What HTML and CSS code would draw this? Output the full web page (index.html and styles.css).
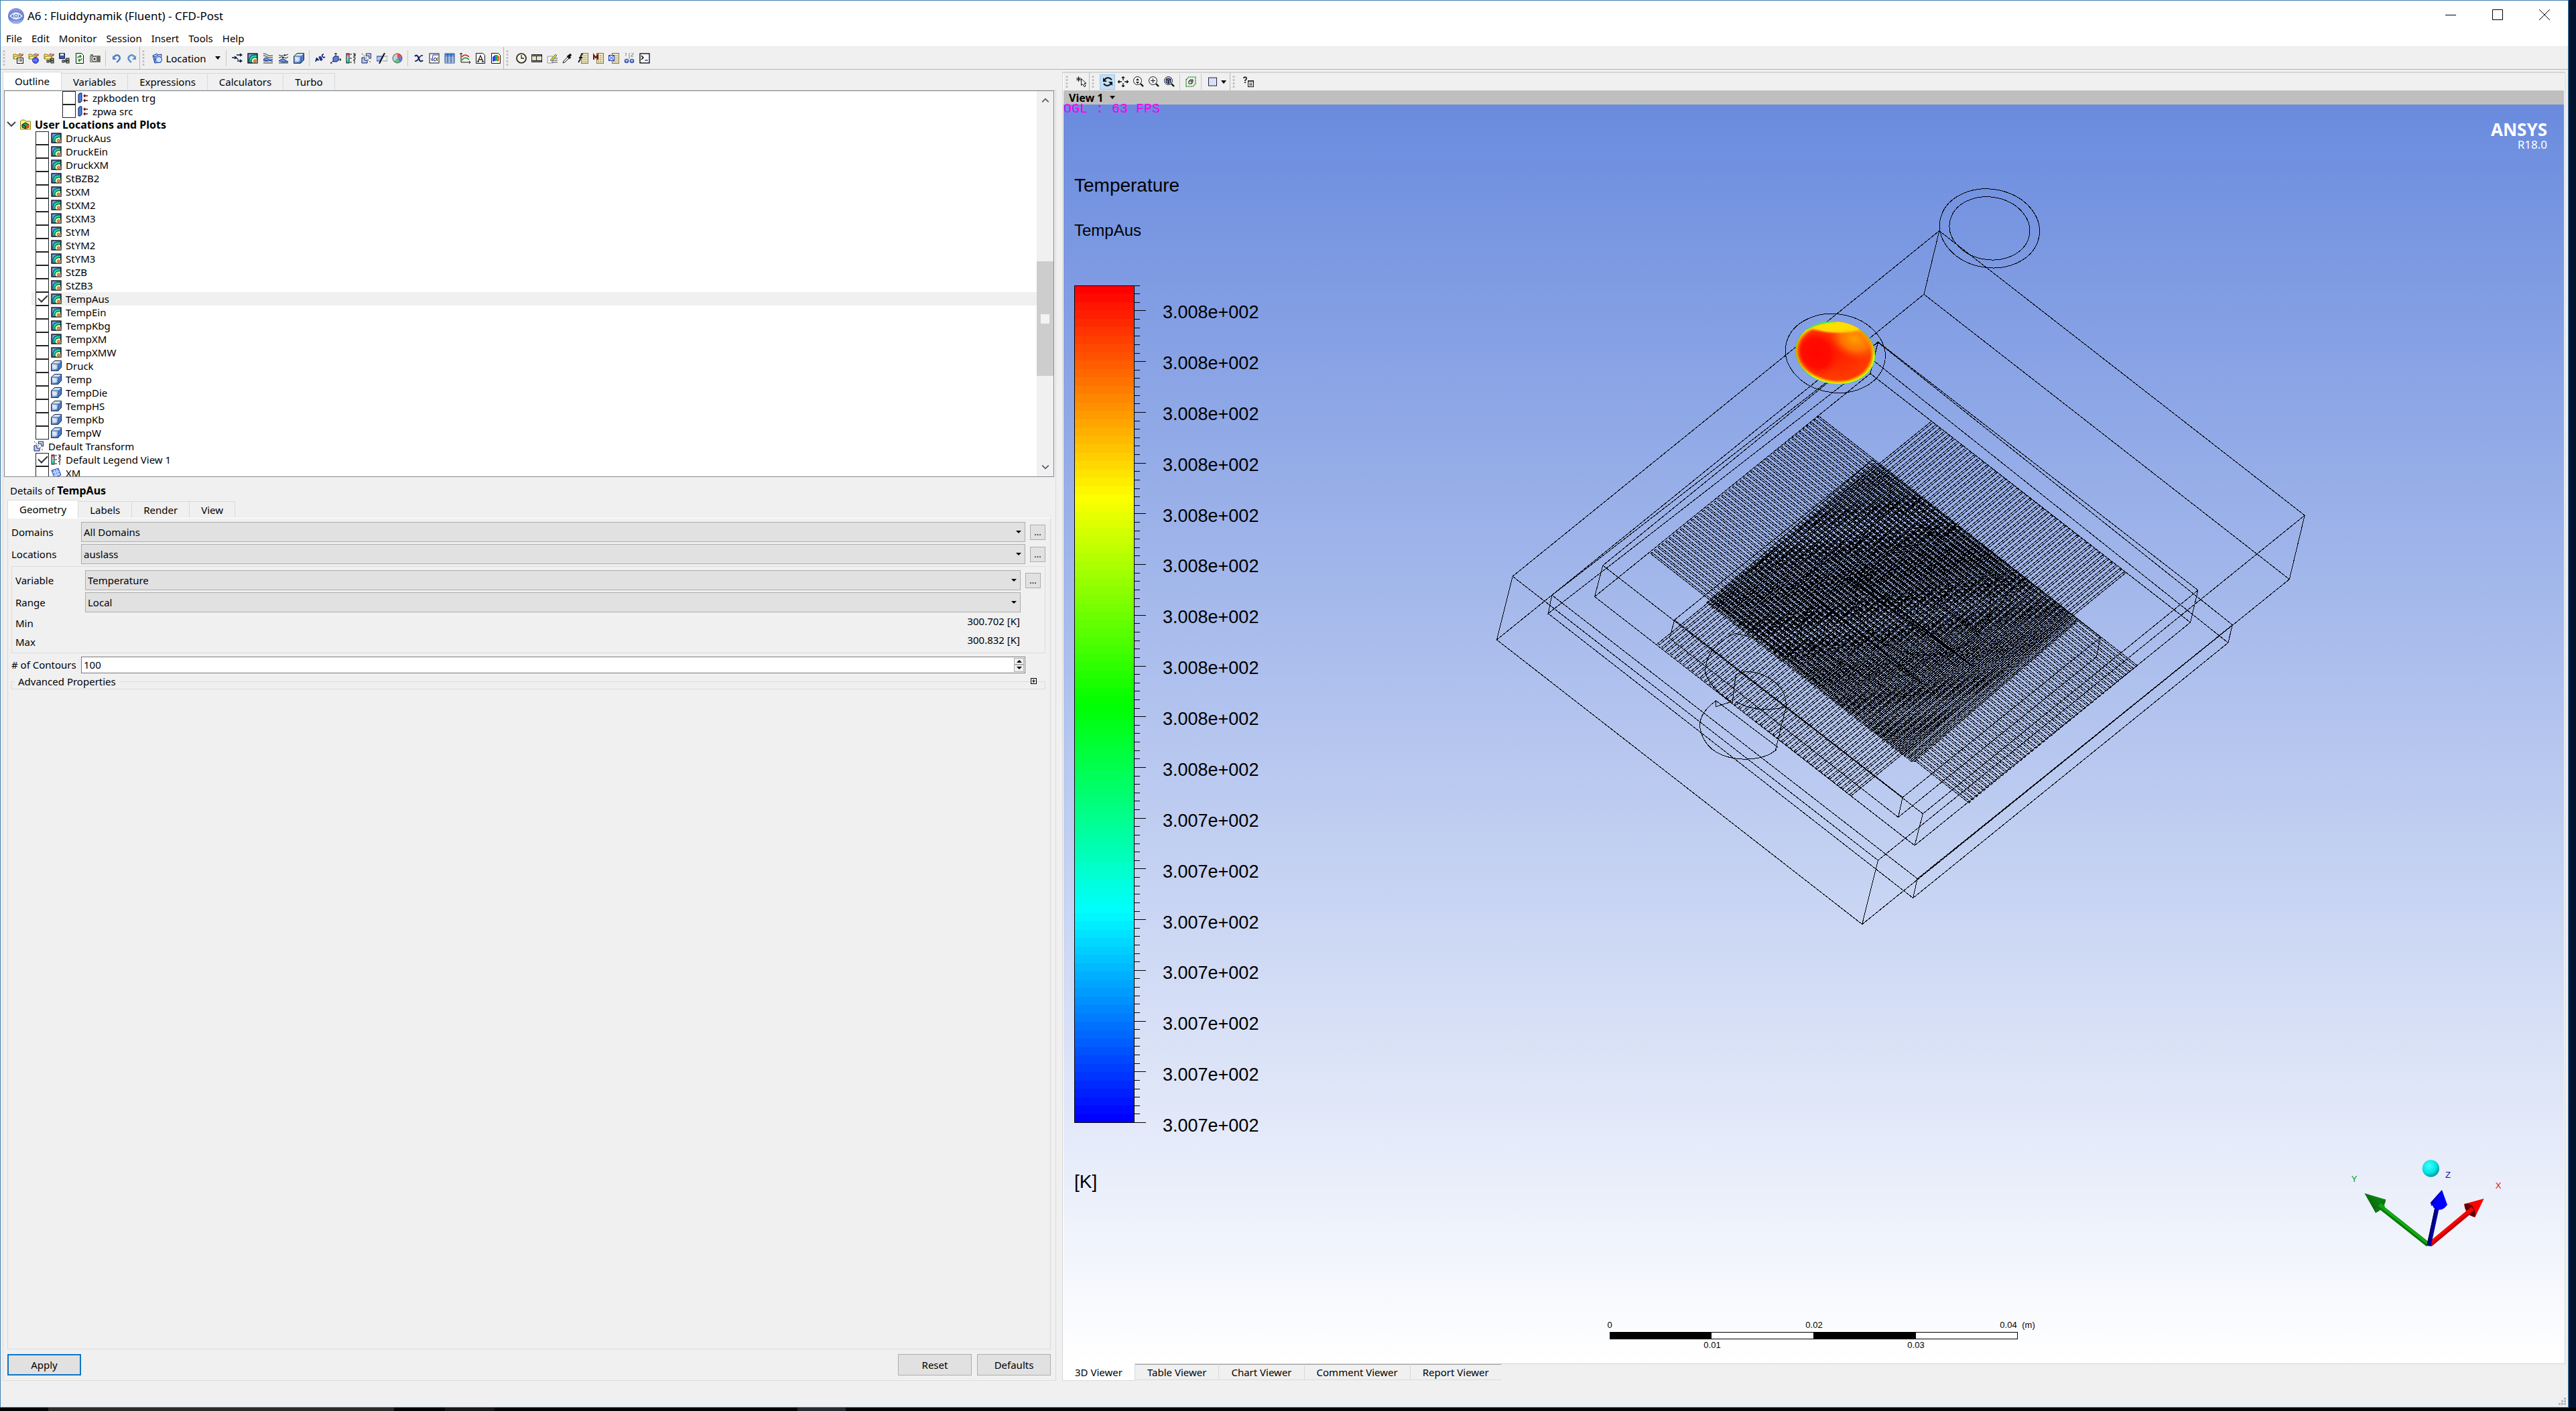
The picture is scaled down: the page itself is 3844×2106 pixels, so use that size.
FILE: index.html
```html
<!DOCTYPE html>
<html lang="en">
<head>
<meta charset="utf-8">
<title>A6 : Fluiddynamik (Fluent) - CFD-Post</title>
<link rel="stylesheet" href="styles.css">
</head>
<body>
<svg class="defs" aria-hidden="true">
  <defs>
    <linearGradient id="cubeFill" x1="0" y1="0" x2="1" y2="1"><stop offset="0" stop-color="#fff"/><stop offset="1" stop-color="#3f74c8"/></linearGradient>
    <linearGradient id="orb" x1="0" y1="0" x2="0" y2="1"><stop offset="0" stop-color="#8d9bd6"/><stop offset=".6" stop-color="#5f78cf"/><stop offset="1" stop-color="#a9c4f4"/></linearGradient>
    <linearGradient id="rainbow" x1="0" y1="0" x2="0" y2="1"><stop offset="0" stop-color="#e33"/><stop offset=".3" stop-color="#ffb0e0"/><stop offset=".6" stop-color="#4fd"/><stop offset="1" stop-color="#3c9"/></linearGradient>
    <g id="folder"><path d="M1 8V2h4l1 1h5v5z" fill="#ffe46b" stroke="#8a7410"/><path d="M1 9l2-4h10l-3 4z" fill="#fff3a0" stroke="#8a7410"/><path d="M9 2q3-2 5 1M15 1v3h-3" fill="none" stroke="#a01010"/></g>
    <g id="net" fill="#9fd08a" stroke="#111"><path d="M7 12h3M10 9v5" fill="none"/><rect x="5" y="11" width="3" height="3"/><rect x="11" y="8" width="4" height="3"/><rect x="11" y="12" width="4" height="3"/></g>
    <g id="grid"><rect x="5.500" y=".5" width="10" height="15" fill="#efe6bd" stroke="#7a7350"/><path d="M7 4h7M7 7h7M7 10h7M7 13h7" stroke="#8d8560" stroke-dasharray="2 1"/></g>
    <symbol id="i-load" viewBox="0 0 16 16"><use href="#folder"/><rect x="6.500" y="7.500" width="9" height="8" fill="#fff" stroke="#111"/><path d="M8 10h1m1 0h4M8 12h1m1 0h4" stroke="#111"/></symbol>
    <symbol id="i-state" viewBox="0 0 16 16"><use href="#folder"/><circle cx="11" cy="11" r="4.500" fill="#4a5cf0" stroke="#2535b0"/><path d="M8 11h6" stroke="#fff" stroke-dasharray="1 1"/></symbol>
    <symbol id="i-session" viewBox="0 0 16 16"><use href="#folder"/><use href="#net"/></symbol>
    <symbol id="i-save" viewBox="0 0 16 16"><path d="M.5.5h8v8h-8z" fill="#3a55a8" stroke="#16245c"/><path d="M2 1h5v3H2z" fill="#dfe6f8"/><use href="#net"/></symbol>
    <symbol id="i-refresh" viewBox="0 0 16 16"><path d="M2.500.5h8l3 3v12h-11z" fill="#fff" stroke="#111"/><path d="M5 8q0-3 4-3M8 3l2 2-2 2M11 8q0 3-4 3M8 9l-2 2 2 2" fill="none" stroke="#149014" stroke-width="1.500"/></symbol>
    <symbol id="i-camera" viewBox="0 0 16 16"><path d="M.5 4.500h15v9H.5z" fill="#b8b5a6" stroke="#77756b"/><path d="M1 2h4v2H1z" fill="#77756b"/><path d="M11 4h4v9h-4z" fill="#6c6a60"/><circle cx="7" cy="9" r="4" fill="#eee" stroke="#555"/><circle cx="7" cy="9" r="1.800" fill="#444"/></symbol>
    <symbol id="i-undo" viewBox="0 0 16 16"><path d="M8 14q7-5 4-9-4-4-8 1" fill="none" stroke="#4a7fc8" stroke-width="2.500"/><path d="M2 4v6h6z" fill="#4a7fc8"/></symbol>
    <symbol id="i-redo" viewBox="0 0 16 16"><path d="M7 14q-7-5-3-9 4-4 8 1" fill="none" stroke="#5a92cc" stroke-width="2.500"/><path d="M14 4v6H8z" fill="#5a92cc"/></symbol>
    <symbol id="i-location" viewBox="0 0 16 16"><path d="M1 4l6-3 2 2 5-1-1 12-9 1z" fill="#b9cff8" stroke="#123a9c"/><path d="M1 4l3 2 5-3M4 6v9" fill="none" stroke="#123a9c"/><circle cx="10" cy="10" r="4.500" fill="#d5e3ff" stroke="#123a9c"/></symbol>
    <symbol id="i-vector" viewBox="0 0 16 16"><path d="M0 7h6M4 5l3 2-3 2M7 3h7M12 1l3 2-3 2M8 12h6M12 10l3 2-3 2M7 8l3 2" fill="none" stroke="#0a1440" stroke-width="1.300"/></symbol>
    <symbol id="i-contour" viewBox="0 0 16 16"><rect x="1" y="1" width="14" height="14" fill="#6f9de8" stroke="#111" stroke-width="1.400"/><path d="M3 14.500V9q1-5 6-6h5.500v11.500z" fill="#17dca8" stroke="#123"/><path d="M6 14.500V10q2-4 8.500-3.500v8z" fill="#c9f7a0" stroke="#123"/><path d="M8 14.500v-3q2-3 6.500-1v4z" fill="#ffe9a0"/><circle cx="11.500" cy="12" r="1.700" fill="#f6c0a8" stroke="#a01818"/></symbol>
    <symbol id="i-stream" viewBox="0 0 16 16"><path d="M1 1q4 0 6 2t8 1M1 4q4 0 6 2t8 1M1 15h14M1 12q5 1 9-1l5 2" fill="none" stroke="#222"/><path d="M1 10q3-5 6-2t8 2q-6 4-14 0z" fill="#5d94ea" stroke="#123a8c"/></symbol>
    <symbol id="i-particle" viewBox="0 0 16 16"><path d="M1 3q6 3 14-1M1 7q5-2 8 0t6-1M1 15h14" fill="none" stroke="#222"/><circle cx="10" cy="3" r="1"/><circle cx="7" cy="7" r="1"/><path d="M1 12q5-5 9-2t5 3q-7 2-14-1z" fill="#5d94ea" stroke="#123a8c"/></symbol>
    <symbol id="i-cube" viewBox="0 0 16 16"><path d="M.5 5l5-4.500h10v10l-5 5H.5z" fill="#4c7fc8" stroke="#123" /><path d="M1 5l5-4h9l-4 4z" fill="#cfe2fb"/><rect x="1" y="5" width="10" height="10" fill="url(#cubeFill)" stroke="#2c5390"/><circle cx="6" cy="10" r="3" fill="#fff" opacity=".6"/></symbol>
    <symbol id="i-abc" viewBox="0 0 16 16"><path d="M1 13l1.500-5L6 11M2 11l2-1M6 6l3 5q3-1 0-3 1-3-3-2M15 6q-3 2-4-1t2-3" fill="none" stroke="#14207a" stroke-width="1.700"/></symbol>
    <symbol id="i-coord" viewBox="0 0 16 16"><path d="M8 6V0M6 2l2-2 2 2M10 10h6M14 8l2 2-2 2M4 12l-4 4M0 13v3h3" fill="none" stroke="#111"/><path d="M4 7l2-2h6v6l-2 2H4z" fill="#5d7ee0" stroke="#102060"/></symbol>
    <symbol id="i-legend" viewBox="0 0 16 16"><rect x="1" y="1" width="4" height="14" fill="url(#rainbow)" stroke="#111"/><path d="M6 2h3M6 8h3M6 14h3M11 1h3v2h-2 2v2h-3M11 7h3v2l-3 2h3M13 12v4" fill="none" stroke="#111"/></symbol>
    <symbol id="i-transform" viewBox="0 0 16 16"><path d="M7 1h8v8h-3V5H7z" fill="#b9cff8" stroke="#111a50" transform="translate(1 0) scale(.9)"/><path d="M1 8h4v4h4v4H1z" fill="#b9cff8" stroke="#111a50" transform="translate(0 -1)"/><path d="M1 1l14 14" stroke="#111" stroke-dasharray="2 2"/></symbol>
    <symbol id="i-clip" viewBox="0 0 16 16"><path d="M0 5h9l-4 7H0z" fill="#a9c4f6" stroke="#16308c"/><path d="M12 0L4 16" stroke="#111" stroke-width="2"/><path d="M11 5h5v7H8" fill="none" stroke="#333" stroke-dasharray="1 1"/></symbol>
    <symbol id="i-color" viewBox="0 0 16 16"><circle cx="8" cy="8" r="7" fill="#a8e0f0"/><path d="M8 8L2 4q3-4 6-3z" fill="#f7b6c8"/><path d="M8 8V1q5 0 7 5z" fill="#e85050"/><path d="M8 8l7-2q0 6-4 8z" fill="#5a78e8"/><path d="M8 8l3 6q-5 2-8-2z" fill="#58d058"/><circle cx="8" cy="8" r="7" fill="none" stroke="#555"/></symbol>
    <symbol id="i-var" viewBox="0 0 16 16"><path d="M2 5q3-3 5 1l2 5q2 3 5 0" fill="none" stroke="#101c60" stroke-width="2.200"/><path d="M14 4q-3-1-6 4t-6 4" fill="none" stroke="#101c60" stroke-width="1.500"/></symbol>
    <symbol id="i-expr" viewBox="0 0 16 16"><rect x="1" y="1" width="14" height="14" fill="#fff" stroke="#111"/><path d="M3 8l2 4 1-9h8" fill="none" stroke="#2030c0"/><path d="M13 7q-3 6-5 5t0-4 5 4" fill="none" stroke="#111"/></symbol>
    <symbol id="i-table" viewBox="0 0 16 16"><rect x="1" y="1" width="14" height="14" fill="#e8f0ff" stroke="#1d4a94"/><path d="M1 3h14" stroke="#3a78d8" stroke-width="3"/><path d="M1 6h14M1 9h14M1 12h14M5 1v14M10 1v14" stroke="#1d4a94"/></symbol>
    <symbol id="i-chart" viewBox="0 0 16 16"><path d="M2 0v14h14M0 2l2-2 2 2M14 12l2 2-2 2" fill="none" stroke="#111"/><path d="M3 6q5-6 11 0" fill="none" stroke="#d01818" stroke-width="1.500"/><path d="M3 11q5-7 11-1" fill="none" stroke="#189018" stroke-width="1.500"/></symbol>
    <symbol id="i-text" viewBox="0 0 16 16"><path d="M1.500.5h10l3 3v12h-13z" fill="#fff" stroke="#111"/><path d="M4 13l4-9 4 9M6 10h4M3 13h3M10 13h3" fill="none" stroke="#222" stroke-width="1.300"/></symbol>
    <symbol id="i-figure" viewBox="0 0 16 16"><path d="M1.500.5h10l3 3v12h-13z" fill="#fff" stroke="#111"/><path d="M3 6l4-3v9l-4 1z" fill="#2848e0"/><path d="M7 3h3v9H7z" fill="#20b050"/><path d="M10 3l3 2v7l-3 1z" fill="#e87020"/></symbol>
    <symbol id="i-clock" viewBox="0 0 16 16"><circle cx="8" cy="8" r="7" fill="#fbf8e8" stroke="#222" stroke-width="1.700"/><path d="M8 3v5h4" fill="none" stroke="#222" stroke-width="1.300"/></symbol>
    <symbol id="i-film" viewBox="0 0 16 16"><path d="M0 2h16v12H0z" fill="#222"/><path d="M1 5h6v6H1zM8 5h7v6H8z" fill="#e6e2c8"/><path d="M1 3.500h14M1 12.500h14" stroke="#eee" stroke-dasharray="1 1"/></symbol>
    <symbol id="i-edit" viewBox="0 0 16 16"><path d="M1 5h8v10H1z" fill="#f4f4f4" stroke="#999"/><path d="M7 8h9M7 11h9M7 14h9" stroke="#555"/><path d="M5 11L13 2l2 2-8 8z" fill="#e8e020" stroke="#666"/></symbol>
    <symbol id="i-probe" viewBox="0 0 16 16"><path d="M1 15l1-3 7-7 2 2-7 7z" fill="#e8e8e0" stroke="#222"/><path d="M8 4l4 4M10 5l3-3" stroke="#111" stroke-width="3.400"/></symbol>
    <symbol id="i-func" viewBox="0 0 16 16"><use href="#grid"/><path d="M8 2q-3-1-3.500 4T1 14M2 7h5" fill="none" stroke="#111" stroke-width="1.800"/></symbol>
    <symbol id="i-macro" viewBox="0 0 16 16"><use href="#grid"/><path d="M1 10V3l3 4 3-4v7" fill="none" stroke="#7a1010" stroke-width="2"/></symbol>
    <symbol id="i-meshcalc" viewBox="0 0 16 16"><use href="#grid"/><path d="M.5 3.500h8v8h-8zl8 8m0-8l-8 8" fill="#dce6ff" stroke="#1830c0"/></symbol>
    <symbol id="i-compare" viewBox="0 0 16 16"><path d="M2 1l1-1v5M10 0h4v2l-4 3h4M8 0v9" fill="none" stroke="#888"/><circle cx="4" cy="12" r="3.300" fill="#2d4fb0"/><circle cx="12" cy="12" r="3.300" fill="#2d4fb0"/><path d="M2 11h4M4 11v3M10 11h4M12 11v3" stroke="#fff"/></symbol>
    <symbol id="i-cmd" viewBox="0 0 16 16"><rect x="1" y="1" width="14" height="14" fill="#fff" stroke="#111" stroke-width="1.400"/><path d="M3 4l3 3-3 3" fill="none" stroke="#111" stroke-width="1.600"/><path d="M8 11h5" stroke="#2850a8" stroke-width="1.500"/></symbol>
    <symbol id="i-pick" viewBox="0 0 16 16"><path d="M0 4h7M3.500 0v8M1 1.500l5 5M6 1.500l-5 5" stroke="#111"/><path d="M7.500 3.500v10l2.500-2 2 4 2-1-2-4h3z" fill="#fff" stroke="#111"/></symbol>
    <symbol id="i-rotate" viewBox="0 0 16 16"><path d="M14 5Q8-1 3 5M2 11q5 6 11 0" fill="none" stroke="#111" stroke-width="2"/><path d="M1 2v6h6zM15 14V8H9z" fill="#111"/></symbol>
    <symbol id="i-pan" viewBox="0 0 16 16"><path d="M8 6V0M6 2.500L8 .5l2 2M8 10v6M6 13.500l2 2 2-2M6 8H0M2.500 6l-2 2 2 2M10 8h6M13.500 6l2 2-2 2" fill="none" stroke="#111" stroke-width="1.300"/></symbol>
    <g id="lens"><circle cx="6.500" cy="6.500" r="6" fill="#f8fbff" stroke="#111"/><path d="M11 11l4 4" stroke="#111" stroke-width="2.400"/></g>
    <symbol id="i-zoom" viewBox="0 0 16 16"><use href="#lens"/><path d="M4 6l2.500-3L9 6zM4 8l2.500 3L9 8z"/></symbol>
    <symbol id="i-zoombox" viewBox="0 0 16 16"><use href="#lens"/><path d="M3 6.500h7M6.500 3v7" stroke="#111"/></symbol>
    <symbol id="i-fit" viewBox="0 0 16 16"><use href="#lens"/><path d="M3 4l3.500-1.500L10 4v5l-3.500 2L3 9z" fill="#5d7ee0" stroke="#111"/><path d="M3 4l3.500 2L10 4M6.500 6v5" fill="none" stroke="#111"/></symbol>
    <symbol id="i-outline" viewBox="0 0 16 16"><path d="M1 5l4-4h10v10l-4 4H1z" fill="none" stroke="#108a10" stroke-width="1.600" stroke-dasharray="1.500 1"/><path d="M5 7l2-2h4v4l-2 2H5zM5 7h4v4M9 7l2-2" fill="#fff" stroke="#111"/></symbol>
    <symbol id="i-square" viewBox="0 0 16 16"><rect x="1.500" y="2" width="12" height="12" fill="#d6e2fa" stroke="#223"/></symbol>
    <symbol id="i-help" viewBox="0 0 16 16"><path d="M1 3q0-2 2-2t2 2-2 3v1M3 8v2" fill="none" stroke="#111" stroke-width="1.700"/><rect x="7.500" y="6.500" width="8" height="9" fill="#fff" stroke="#111"/><path d="M7 8h9M9 11h5M9 13h5" stroke="#111"/></symbol>
    <symbol id="i-boundary" viewBox="0 0 16 16"><path d="M1 3l2-2h3v12l-2 2H1z" fill="#4c7fe0" stroke="#0a1a50"/><path d="M9 5h6M11 3L9 5l2 2M9 12h6M11 10l-2 2 2 2" fill="none" stroke="#6a1010" stroke-width="1.300"/></symbol>
    <symbol id="i-group" viewBox="0 0 16 16"><path d="M.5 15V3l2-2h4l2 2h7v12z" fill="#f8ef80" stroke="#8a8010"/><path d="M3 8l5-3 5 3v4l-5 2-5-2z" fill="#20a860" stroke="#111"/><path d="M8 9l5-1v4l-5 2z" fill="#e05020"/><path d="M3 8l5 2v4" fill="none" stroke="#111"/></symbol>
    <symbol id="i-plane" viewBox="0 0 16 16"><path d="M1 4l10-3 4 10-10 4z" fill="#7ba6f4" stroke="#123a9c"/><path d="M2.500 8l10-3M4 12l10-3M4.500 3l4 10M8 2l4 10" stroke="#dfe9ff"/></symbol>
  </defs>
</svg>

<div class="window">
  <header class="titlebar">
    <svg class="app-icon" viewBox="0 0 24 24"><circle cx="12" cy="12" r="12" fill="url(#orb)"/><path d="M3 12q9-9 18 0-9 8-18 0z" fill="none" stroke="#fff" stroke-width="1.300"/><circle cx="12" cy="11.500" r="3.500" fill="none" stroke="#fff" stroke-width="1.300"/><circle cx="12" cy="11.500" r="1.300" fill="#fff"/></svg>
    <h1>A6 : Fluiddynamik (Fluent) - CFD-Post</h1>
    <div class="caption">
      <button aria-label="Minimize"><svg viewBox="0 0 16 16"><path d="M0 8.500h16"/></svg></button>
      <button aria-label="Maximize"><svg viewBox="0 0 16 16"><path d="M.5.5h15v15H.5z"/></svg></button>
      <button aria-label="Close"><svg viewBox="0 0 16 16"><path d="M0 0l16 16M16 0L0 16"/></svg></button>
    </div>
  </header>
  <nav class="menubar">
    <button>File</button><button>Edit</button><button>Monitor</button><button>Session</button><button>Insert</button><button>Tools</button><button>Help</button>
  </nav>

  <div class="toolbar">
    <div class="group">
      <i class="handle"></i>
      <button aria-label="Load results"><svg><use href="#i-load"/></svg></button>
      <button aria-label="Load state"><svg><use href="#i-state"/></svg></button>
      <button aria-label="Load session"><svg><use href="#i-session"/></svg></button>
      <button aria-label="Save project"><svg><use href="#i-save"/></svg></button>
      <button aria-label="Refresh"><svg><use href="#i-refresh"/></svg></button>
      <button aria-label="Save picture"><svg><use href="#i-camera"/></svg></button>
      <i class="sep"></i>
      <button aria-label="Undo"><svg><use href="#i-undo"/></svg></button>
      <button aria-label="Redo"><svg><use href="#i-redo"/></svg></button>
    </div>
    <div class="group">
      <i class="handle"></i>
      <button class="location"><svg><use href="#i-location"/></svg>Location<i class="arrow"></i></button>
      <i class="sep"></i>
      <button aria-label="Vector"><svg><use href="#i-vector"/></svg></button>
      <button aria-label="Contour"><svg><use href="#i-contour"/></svg></button>
      <button aria-label="Streamline"><svg><use href="#i-stream"/></svg></button>
      <button aria-label="Particle track"><svg><use href="#i-particle"/></svg></button>
      <button aria-label="Volume rendering"><svg><use href="#i-cube"/></svg></button>
      <i class="sep"></i>
      <button aria-label="Text"><svg><use href="#i-abc"/></svg></button>
      <button aria-label="Coordinate frame"><svg><use href="#i-coord"/></svg></button>
      <button aria-label="Legend"><svg><use href="#i-legend"/></svg></button>
      <button aria-label="Instance transform"><svg><use href="#i-transform"/></svg></button>
      <button aria-label="Clip plane"><svg><use href="#i-clip"/></svg></button>
      <button aria-label="Color map"><svg><use href="#i-color"/></svg></button>
      <i class="sep"></i>
      <button aria-label="Variable"><svg><use href="#i-var"/></svg></button>
      <button aria-label="Expression"><svg><use href="#i-expr"/></svg></button>
      <button aria-label="Table"><svg><use href="#i-table"/></svg></button>
      <button aria-label="Chart"><svg><use href="#i-chart"/></svg></button>
      <button aria-label="Comment"><svg><use href="#i-text"/></svg></button>
      <button aria-label="Figure"><svg><use href="#i-figure"/></svg></button>
    </div>
    <div class="group last">
      <i class="handle"></i>
      <button aria-label="Timestep selector"><svg><use href="#i-clock"/></svg></button>
      <button aria-label="Animation"><svg><use href="#i-film"/></svg></button>
      <button aria-label="Quick editor"><svg><use href="#i-edit"/></svg></button>
      <button aria-label="Probe"><svg><use href="#i-probe"/></svg></button>
      <button aria-label="Function calculator"><svg><use href="#i-func"/></svg></button>
      <button aria-label="Macro calculator"><svg><use href="#i-macro"/></svg></button>
      <button aria-label="Mesh calculator"><svg><use href="#i-meshcalc"/></svg></button>
      <button aria-label="Case comparison"><svg><use href="#i-compare"/></svg></button>
      <button aria-label="Command editor"><svg><use href="#i-cmd"/></svg></button>
    </div>
  </div>

  <main class="panes">
    <section class="dock">
      <div class="tabs">
        <button class="active">Outline</button><button>Variables</button><button>Expressions</button><button>Calculators</button><button>Turbo</button>
      </div>
      <div class="dock-body">
        <div class="tree-box">
          <ul class="tree">
            <li class="deep"><label><input type="checkbox"><svg><use href="#i-boundary"/></svg>zpkboden trg</label></li>
            <li class="deep"><label><input type="checkbox"><svg><use href="#i-boundary"/></svg>zpwa src</label></li>
            <li class="branch"><svg class="chevron" viewBox="0 0 14 10"><path d="M1 1l6 6 6-6"/></svg><svg><use href="#i-group"/></svg>User Locations and Plots</li>
            <li><label><input type="checkbox"><svg><use href="#i-contour"/></svg>DruckAus</label></li>
            <li><label><input type="checkbox"><svg><use href="#i-contour"/></svg>DruckEin</label></li>
            <li><label><input type="checkbox"><svg><use href="#i-contour"/></svg>DruckXM</label></li>
            <li><label><input type="checkbox"><svg><use href="#i-contour"/></svg>StBZB2</label></li>
            <li><label><input type="checkbox"><svg><use href="#i-contour"/></svg>StXM</label></li>
            <li><label><input type="checkbox"><svg><use href="#i-contour"/></svg>StXM2</label></li>
            <li><label><input type="checkbox"><svg><use href="#i-contour"/></svg>StXM3</label></li>
            <li><label><input type="checkbox"><svg><use href="#i-contour"/></svg>StYM</label></li>
            <li><label><input type="checkbox"><svg><use href="#i-contour"/></svg>StYM2</label></li>
            <li><label><input type="checkbox"><svg><use href="#i-contour"/></svg>StYM3</label></li>
            <li><label><input type="checkbox"><svg><use href="#i-contour"/></svg>StZB</label></li>
            <li><label><input type="checkbox"><svg><use href="#i-contour"/></svg>StZB3</label></li>
            <li class="selected"><label><input type="checkbox" checked><svg><use href="#i-contour"/></svg>TempAus</label></li>
            <li><label><input type="checkbox"><svg><use href="#i-contour"/></svg>TempEin</label></li>
            <li><label><input type="checkbox"><svg><use href="#i-contour"/></svg>TempKbg</label></li>
            <li><label><input type="checkbox"><svg><use href="#i-contour"/></svg>TempXM</label></li>
            <li><label><input type="checkbox"><svg><use href="#i-contour"/></svg>TempXMW</label></li>
            <li><label><input type="checkbox"><svg><use href="#i-cube"/></svg>Druck</label></li>
            <li><label><input type="checkbox"><svg><use href="#i-cube"/></svg>Temp</label></li>
            <li><label><input type="checkbox"><svg><use href="#i-cube"/></svg>TempDie</label></li>
            <li><label><input type="checkbox"><svg><use href="#i-cube"/></svg>TempHS</label></li>
            <li><label><input type="checkbox"><svg><use href="#i-cube"/></svg>TempKb</label></li>
            <li><label><input type="checkbox"><svg><use href="#i-cube"/></svg>TempW</label></li>
            <li class="plain"><svg><use href="#i-transform"/></svg>Default Transform</li>
            <li><label><input type="checkbox" checked><svg><use href="#i-legend"/></svg>Default Legend View 1</label></li>
            <li><label><input type="checkbox"><svg><use href="#i-plane"/></svg>XM</label></li>
          </ul>
          <div class="scrollbar">
            <svg viewBox="0 0 14 10"><path d="M1 8l6-6 6 6"/></svg>
            <div class="track"><div class="thumb"><i></i></div></div>
            <svg viewBox="0 0 14 10"><path d="M1 2l6 6 6-6"/></svg>
          </div>
        </div>

        <h2>Details of <b>TempAus</b></h2>
        <div class="tabs inner">
          <button class="active">Geometry</button><button>Labels</button><button>Render</button><button>View</button>
        </div>
        <form class="details">
          <div class="row">
            <label for="domains">Domains</label>
            <span class="combo"><select id="domains"><option>All Domains</option></select></span>
            <button type="button" class="more">...</button>
          </div>
          <div class="row">
            <label for="locations">Locations</label>
            <span class="combo"><select id="locations"><option>auslass</option></select></span>
            <button type="button" class="more">...</button>
          </div>
          <div class="frame">
            <div class="row">
              <label for="variable">Variable</label>
              <span class="combo"><select id="variable"><option>Temperature</option></select></span>
              <button type="button" class="more">...</button>
            </div>
            <div class="row">
              <label for="range">Range</label>
              <span class="combo"><select id="range"><option>Local</option></select></span>
              <span class="more-space"></span>
            </div>
            <div class="value"><span>Min</span><output>300.702 [K]</output></div>
            <div class="value"><span>Max</span><output>300.832 [K]</output></div>
          </div>
          <div class="row contours">
            <label for="contours"># of Contours</label>
            <span class="spin"><input id="contours" type="text" value="100"><span class="steps"><button type="button" aria-label="Increase"></button><button type="button" aria-label="Decrease"></button></span></span>
            <span class="more-space"></span>
          </div>
          <fieldset>
            <legend>Advanced Properties</legend>
            <button type="button" class="expand" aria-label="Expand"></button>
          </fieldset>
        </form>
        <div class="actions">
          <button class="primary">Apply</button><span></span><button>Reset</button><button>Defaults</button>
        </div>
      </div>
    </section>

    <section class="viewer">
      <div class="viewer-body">
        <div class="toolbar small">
          <div class="group">
            <i class="handle"></i>
            <button aria-label="Pick"><svg><use href="#i-pick"/></svg></button>
          </div>
          <div class="group">
            <i class="handle"></i>
            <button class="on" aria-label="Rotate"><svg><use href="#i-rotate"/></svg></button>
            <button aria-label="Pan"><svg><use href="#i-pan"/></svg></button>
            <button aria-label="Zoom"><svg><use href="#i-zoom"/></svg></button>
            <button aria-label="Zoom box"><svg><use href="#i-zoombox"/></svg></button>
            <button aria-label="Fit view"><svg><use href="#i-fit"/></svg></button>
            <i class="sep"></i>
            <button aria-label="Highlighting"><svg><use href="#i-outline"/></svg></button>
            <i class="sep"></i>
            <button class="layout" aria-label="Viewport layout"><svg><use href="#i-square"/></svg><i class="arrow"></i></button>
          </div>
          <div class="group last">
            <i class="handle"></i>
            <button aria-label="Viewer help"><svg><use href="#i-help"/></svg></button>
          </div>
        </div>
        <button class="view-name">View 1<i class="arrow"></i></button>

        <div class="viewport">
          <svg class="scene" viewBox="1587 156 2239 1877" preserveAspectRatio="xMidYMid meet">
            <defs>
              <clipPath id="outletClip"><ellipse cx="660" cy="386" rx="74" ry="63" transform="rotate(14 660 386)"/></clipPath>
              <radialGradient id="outlet" cx=".5" cy=".5" r=".5"><stop offset="0" stop-color="#ff1c00"/><stop offset=".86" stop-color="#ff3c00"/><stop offset=".93" stop-color="#ffb400"/><stop offset=".97" stop-color="#d8ff00"/><stop offset="1" stop-color="#00e890"/></radialGradient>
              <radialGradient id="warm"><stop offset="0" stop-color="#ffa000"/><stop offset=".55" stop-color="#ff8000" stop-opacity=".8"/><stop offset="1" stop-color="#ff5000" stop-opacity="0"/></radialGradient>
              <radialGradient id="bright"><stop offset="0" stop-color="#ffe000"/><stop offset=".7" stop-color="#ffd800"/><stop offset="1" stop-color="#ffb000" stop-opacity="0"/></radialGradient>
              <radialGradient id="hot"><stop offset="0" stop-color="#ff0600"/><stop offset=".6" stop-color="#ff0c00"/><stop offset="1" stop-color="#ff2000" stop-opacity="0"/></radialGradient>
              <radialGradient id="ball" cx=".4" cy=".35" r=".7"><stop offset="0" stop-color="#4ff"/><stop offset=".6" stop-color="#00e4e4"/><stop offset="1" stop-color="#008f90"/></radialGradient>
              <linearGradient id="coneG" x1="0" y1="1" x2="1" y2="0"><stop offset="0" stop-color="#084f08"/><stop offset="1" stop-color="#0a9a10"/></linearGradient>
            </defs>
            <g transform="translate(2200 240) scale(.8163 .7398)">
              <g class="wire" id="wire">
                <path d="M850 140L1518 714L1490 843L822 268zM850 140L70 837L41 965L822 268M70 837L738 1410L709 1539L41 965M709 1539L1490 843M738 1410L1518 714"/>
                <path d="M738 365L1386 935L1378 971L730 402zM738 365L142 875L135 912L730 402M142 875L810 1447L802 1486L135 912M810 1447L1386 935M802 1486L1378 971"/>
                <path d="M738 364L1323 865L1309 930L724 428zM738 364L235 815L220 878L724 428M235 815L820 1316L805 1380L220 878M820 1316L1323 865M805 1380L1309 930"/>
                <path d="M728 602L1145 960L1137 1000M728 602L366 925L357 962L775 1323L783 1283L366 925M783 1283L1145 960M775 1323L1137 1000"/>
                <ellipse cx="942" cy="135" rx="92" ry="79" transform="rotate(14 942 135)"/>
                <ellipse cx="942" cy="135" rx="74" ry="63" transform="rotate(14 942 135)"/>
                <ellipse cx="660" cy="387" rx="92" ry="79" transform="rotate(14 660 387)"/>
                <path d="M442 1088Q408 1115 413 1145Q424 1202 492 1206Q535 1206 553 1185L550 1190L570 1100M442 1088L555 1182M442 1088v12q20-8 30-10L478 1035q30-14 62 8t30 60M478 1090q40 25 92 10M422 1030q0-50 55-78l45 12M422 1030q8 32 50 62"/>
                <ellipse cx="775" cy="830" rx="62" ry="54" transform="rotate(14 775 830)"/>
                <ellipse cx="795" cy="850" rx="72" ry="62" transform="rotate(14 795 850)"/>
                <ellipse cx="820" cy="885" rx="125" ry="110" transform="rotate(14 820 885)"/>
                <path class="bold" d="M655 800L885 995M680 840L915 1020M590 850L820 1055M700 840L800 925"/>
                <path d="M700 770L760 690L985 860L920 950zM700 770v40M985 860l-8 40M580 860L690 765M590 960L620 880L840 1070L780 1080zM760 690V650"/>
              </g>
              <g clip-path="url(#outletClip)">
                <ellipse cx="660" cy="386" rx="74" ry="63" fill="url(#outlet)" transform="rotate(14 660 386)"/>
                <ellipse cx="695" cy="358" rx="50" ry="40" fill="url(#warm)" transform="rotate(30 695 358)"/>
                <ellipse cx="660" cy="332" rx="62" ry="16" fill="url(#bright)" transform="rotate(2 660 332)"/>
                <ellipse cx="626" cy="386" rx="42" ry="50" fill="url(#hot)" transform="rotate(-20 626 386)"/>
                <path d="M606 337Q630 322 662 321M704 335Q722 348 731 368" fill="none" stroke="#40e060" stroke-width="6"/>
              </g>
            </g>
            <g transform="translate(3480 1700) scale(.3333)">
              <circle cx="442" cy="129" r="38" fill="url(#ball)"/>
              <path d="M430 470L215 300" stroke="#0a7a0a" stroke-width="22"/><path d="M430 466L218 298" stroke="#10b010" stroke-width="10"/>
              <path d="M145 240L240 268Q240 300 195 328z" fill="url(#coneG)"/><path d="M240 268q-4 40-45 60-8-20 12-40t33-20z" fill="#0a7810"/><path d="M232 305L212 290" stroke="#10a010" stroke-width="18"/>
              <path d="M438 470L630 310" stroke="#c00000" stroke-width="22"/><path d="M436 466L625 308" stroke="#f00" stroke-width="12"/>
              <path d="M680 264L592 288Q596 336 640 347z" fill="#f00"/><path d="M592 288q30-6 42 18t6 41q-44-8-48-59z" fill="#640000"/><path d="M605 328L630 308" stroke="#f00" stroke-width="18"/>
              <path d="M433 476L470 305" stroke="#0000a0" stroke-width="19"/><path d="M429 470L464 305" stroke="#000070" stroke-width="8"/>
              <path d="M492 225L516 292Q490 328 456 306L441 282z" fill="#00f"/><path d="M492 225L441 282l4 16z" fill="#0000b0"/>
            </g>
            <g class="axis">
              <text x="3513" y="1763" fill="#0a9a10">Y</text>
              <text x="3653" y="1757" fill="#1010a0">Z</text>
              <text x="3728" y="1773" fill="#e01010">X</text>
            </g>
            <g class="ruler">
              <rect x="2402.500" y="1987.500" width="608" height="10" fill="#fff" stroke="#000"/>
              <path d="M2402 1987h152v11h-152zM2706 1987h153v11h-153z"/>
              <text x="2402" y="1981">0</text><text x="2707" y="1981">0.02</text><text x="2997" y="1981">0.04</text><text x="3027" y="1981">(m)</text>
              <text x="2555" y="2011">0.01</text><text x="2859" y="2011">0.03</text>
            </g>
          </svg>
          <div class="fps">OGL : 63 FPS</div>
          <div class="brand"><b>ANSYS</b><span>R18.0</span></div>
          <div class="legend">
            <div class="legend-title">Temperature</div>
            <div class="legend-name">TempAus</div>
            <div class="legend-scale">
              <svg id="colorbar" viewBox="0 0 108 1250" preserveAspectRatio="none"></svg>
              <div class="legend-values">
                <span>3.008e+002</span><span>3.008e+002</span><span>3.008e+002</span><span>3.008e+002</span><span>3.008e+002</span><span>3.008e+002</span><span>3.008e+002</span><span>3.008e+002</span><span>3.008e+002</span><span>3.008e+002</span><span>3.007e+002</span><span>3.007e+002</span><span>3.007e+002</span><span>3.007e+002</span><span>3.007e+002</span><span>3.007e+002</span><span>3.007e+002</span>
              </div>
            </div>
            <div class="legend-title">[K]</div>
          </div>
        </div>
      </div>
      <div class="tabs bottom">
        <button class="active">3D Viewer</button><button>Table Viewer</button><button>Chart Viewer</button><button>Comment Viewer</button><button>Report Viewer</button>
      </div>
    </section>
  </main>
  <footer class="statusbar"><svg viewBox="0 0 12 12"><path d="M8 0h3v3H8zM4 4h3v3H4zM8 4h3v3H8zM0 8h3v3H0zM4 8h3v3H4zM8 8h3v3H8z" fill="#b8b8b8"/></svg></footer>
</div>
<div class="taskbar"></div>
<script src="scene.js"></script>
</body>
</html>
```
FILE: styles.css
```css
* { box-sizing: border-box; }
body {
  margin: 0;
  min-height: 100vh;
  display: flex;
  flex-direction: column;
  background: #001430;
  color: #000;
  font: 15px/20px "Noto Sans", "Open Sans", sans-serif;
}
button, input, select { font: inherit; color: inherit; }
button { border: 0; padding: 0; background: none; white-space: nowrap; }
.defs { position: absolute; width: 0; height: 0; }

.window {
  flex: 1;
  display: flex;
  flex-direction: column;
  margin-right: 11px;
  border: 1px solid #3f80b4;
  background: #f0f0f0;
}
.taskbar {
  height: 7px;
  background: linear-gradient(90deg, #000208 72px, #2b2b2b 72px 588px, #000208 588px 664px, #15181c 664px 738px, #000208 738px 1190px, #262b33 1190px 1262px, #000208 1262px);
}

.titlebar { display: flex; align-items: center; height: 45px; padding-left: 11px; background: #fff; }
.app-icon { width: 24px; height: 24px; margin-right: 5px; }
.titlebar h1 { flex: 1; margin: 0; font-size: 17px; font-weight: 400; line-height: 24px; }
.caption { display: flex; }
.caption button { width: 70px; height: 43px; }
.caption svg { width: 16px; height: 16px; fill: none; stroke: #000; }

.menubar { display: flex; height: 24px; padding-left: 1px; background: #fff; border-bottom: 1px solid #ececec; }
.menubar button { padding: 0 7px; height: 21px; line-height: 20px; }

.toolbar { display: flex; height: 34px; border-bottom: 1px solid #b4b4b4; }
.group { display: flex; align-items: center; border-right: 1px solid #b8b8b8; }
.group.last { border-right: 0; }
.toolbar button { width: 23px; height: 23px; display: flex; align-items: center; justify-content: center; }
.toolbar svg { width: 16px; height: 16px; flex: none; }
.handle { width: 14px; height: 25px; background: radial-gradient(circle, #bdbdbd 1px, transparent 2px) 3px 0 / 4px 5px repeat-y; }
.sep { width: 9px; height: 24px; background: linear-gradient(#c8c8c8, #c8c8c8) 4px 0 / 1px 24px no-repeat; }
.toolbar .location { width: 110px; gap: 4px; }
.arrow { width: 0; height: 0; border: 4px solid transparent; border-top: 5px solid #000; border-bottom: 0; }
.location .arrow { margin-left: 9px; }

.panes {
  flex: 1;
  min-height: 0;
  display: grid;
  grid-template-columns: minmax(0, 1572fr) minmax(0, 2243fr);
  column-gap: 9px;
  padding: 3px 4px 0 3px;
}
.tabs { display: flex; align-items: flex-start; height: 27px; padding-top: 2px; }
.tabs button { height: 25px; padding: 0 17px; border: 1px solid #d9d9d9; border-left: 0; border-bottom: 0; }
.tabs .active { height: 27px; margin-top: -2px; background: #fff; border-left: 1px solid #d9d9d9; }

.dock { display: flex; flex-direction: column; min-width: 0; margin-bottom: 1px; }
.dock-body {
  flex: 1;
  display: flex;
  flex-direction: column;
  padding: 0 7px 7px 6px;
  border: 1px solid #dcdcdc;
}
.tree-box { display: flex; height: 577px; margin: 0 -5px; border: 1px solid #828790; background: #fff; overflow: hidden; }
.tree { flex: 1; margin: 0; padding: 0; list-style: none; }
.tree li { display: flex; align-items: center; height: 20px; margin-left: 40px; padding-left: 6px; }
.tree label { display: flex; align-items: center; }
.tree svg { width: 16px; height: 16px; margin: 0 6px 0 3px; flex: none; }
.tree input {
  appearance: none;
  position: relative;
  width: 20px;
  height: 20px;
  margin: 0;
  border: 1px solid #222;
  background: #fff;
}
.tree input:checked::after {
  content: "";
  position: absolute;
  left: 3px;
  top: 3px;
  width: 12px;
  height: 6px;
  border-left: 2px solid #333;
  border-bottom: 2px solid #333;
  transform: rotate(-45deg);
}
.tree .deep { margin-left: 80px; }
.tree .branch { margin-left: 3px; padding-left: 0; font-size: 16px; font-weight: 700; }
.tree .branch .chevron { width: 14px; height: 10px; margin: 0 3px 0 0; fill: none; stroke: #444; stroke-width: 2; }
.tree .plain { padding-left: 0; }
.tree .selected { background: #f0f0f0; }
.scrollbar { display: flex; flex-direction: column; align-items: center; width: 25px; padding: 10px 0; background: #f0f0f0; }
.scrollbar svg { width: 12px; height: 8px; fill: none; stroke: #555; stroke-width: 2; }
.scrollbar .track { flex: 1; align-self: stretch; padding-top: 236px; }
.thumb { height: 171px; display: flex; align-items: center; justify-content: center; background: #cdcdcd; }
.thumb i { width: 13px; height: 14px; background: #f3f3f3; }

h2 { margin: 0; padding: 10px 0 4px 4px; font-size: 15px; font-weight: 400; line-height: 20px; }
h2 b { font-size: 16px; }
.details {
  flex: 1;
  padding: 5px 7px 0 5px;
  border: 1px solid #d9d9d9;
  border-top-color: #fff;
}
.row { display: flex; align-items: center; height: 30px; margin-bottom: 3px; }
.row label { width: 104px; flex: none; overflow: hidden; white-space: nowrap; }
.combo { position: relative; flex: 1; height: 30px; }
.combo::after {
  content: "";
  position: absolute;
  right: 6px;
  top: 13px;
  border: 4px solid transparent;
  border-top-color: #000;
  border-bottom: 0;
}
.combo select { appearance: none; width: 100%; height: 30px; padding: 0 3px; border: 1px solid #adadad; border-radius: 0; background: #e1e1e1; }
.more { width: 23px; height: 23px; margin-left: 7px; border: 1px solid #adadad; background: #e1e1e1; line-height: 20px; font-size: 13px; }
.more-space { width: 30px; flex: none; }
.frame { height: 130px; padding: 5px 6px 0 5px; border: 1px solid #dcdcdc; }
.value { display: flex; justify-content: space-between; height: 28px; padding-right: 31px; line-height: 26px; }
.value output { line-height: 20px; }
.contours { height: 26px; margin: 4px 0 0; }
.contours label { width: 98px; margin-right: 6px; }
.spin { flex: 1; display: flex; height: 25px; padding: 1px; border: 1px solid #7a7a7a; background: #fff; }
.spin input { flex: 1; min-width: 0; padding: 0 2px; border: 0; background: none; }
.steps { display: flex; flex-direction: column; width: 15px; }
.steps button { flex: 1; display: grid; place-items: center; border: 1px solid #adadad; background: #f0f0f0; }
.steps button::after { content: ""; border: 4px solid transparent; border-bottom-color: #000; border-top: 0; }
.steps button + button::after { border: 4px solid transparent; border-top-color: #000; border-bottom: 0; }
fieldset { display: flex; justify-content: flex-end; height: 22px; margin: 2px 0 0; padding: 0 12px 0 4px; border: 1px solid #dcdcdc; }
fieldset legend { padding: 0 5px; line-height: 20px; }
.expand { width: 9px; height: 9px; margin-top: -15px; border: 1px solid #000; background: linear-gradient(#000, #000) center / 5px 1px no-repeat, linear-gradient(#000, #000) center / 1px 5px no-repeat, #f0f0f0; }
.actions { display: flex; gap: 8px; padding-top: 7px; }
.actions span { flex: 1; }
.actions button { width: 110px; height: 32px; border: 1px solid #adadad; background: #e1e1e1; }
.actions .primary { border: 2px solid #0f74c4; }

.viewer { display: flex; flex-direction: column; min-width: 0; }
.viewer-body { flex: 1; display: flex; flex-direction: column; padding: 0 1px; border: 1px solid #d4d4d4; border-top-width: 2px; background: #fff; }
.toolbar.small { height: 26px; border: 0; background: #f0f0f0; }
.small .handle { width: 15px; height: 20px; }
.small .on { background: #c4def5; outline: 1px solid #98c8ee; outline-offset: -1px; }
.small .layout { width: 38px; gap: 4px; }
.view-name { display: flex; align-items: center; gap: 10px; height: 21px; padding-left: 8px; background: #bfbfbf; font-size: 16px; font-weight: 700; }
.viewport {
  position: relative;
  flex: 1;
  display: flex;
  flex-direction: column;
  background: linear-gradient(#6a8bde, #fff);
  font-family: "Liberation Sans", Arial, sans-serif;
}
.scene { position: absolute; inset: 0; width: 100%; height: 100%; }
.wire { fill: none; stroke: #000; stroke-width: 1px; shape-rendering: crispEdges; }
.wire * { vector-effect: non-scaling-stroke; }
.wire .bold { stroke-width: 2px; }
.axis text, .ruler text { font-size: 13px; text-anchor: middle; }
.fps { position: absolute; left: 0; top: -1px; color: #f000f0; font: 20px/16px "Liberation Mono", monospace; }
.brand { position: absolute; right: 25px; top: 23px; display: flex; flex-direction: column; align-items: flex-end; color: #fff; font-family: "Noto Sans", sans-serif; }
.brand b { font-size: 26px; line-height: 28px; }
.brand span { font-size: 17px; line-height: 18px; }
.legend { position: relative; flex: 1; display: flex; flex-direction: column; padding: 105px 0 255px 16px; font-size: 27px; line-height: 32px; }
.legend-title { font-size: 28px; }
.legend-name { margin: 37px 0 68px; font-size: 24px; line-height: 28px; }
.legend-scale { flex: 1; display: flex; gap: 24px; margin-bottom: 72px; }
#colorbar { width: 108px; height: 100%; shape-rendering: crispEdges; }
.legend-values { display: flex; flex-direction: column; justify-content: space-between; margin: 24px 0 -20px; }
.tabs.bottom { height: 26px; padding: 0; }
.tabs.bottom button { height: 24px; padding: 0 18px; border-top: 1px solid #a0a0a0; border-bottom: 1px solid #d9d9d9; }
.tabs.bottom .active { height: 26px; margin-top: -1px; border-top: 0; }
.tabs.bottom button:last-child { border-right: 0; }
.statusbar { display: flex; justify-content: flex-end; align-items: flex-end; height: 38px; padding: 0 2px 2px; }
.statusbar svg { width: 12px; height: 12px; }
```
FILE: scene.js
```js
const NS = 'http://www.w3.org/2000/svg';
function add(parent, tag, attrs) {
  const el = document.createElementNS(NS, tag);
  for (const k in attrs) el.setAttribute(k, attrs[k]);
  parent.appendChild(el);
}

// Colour bar: one band for each of the 100 contours, then the tick marks.
const bar = document.getElementById('colorbar');
const BANDS = 100, H = 1249;
for (let i = 0; i < BANDS; i++) {
  const t = i / (BANDS - 1) * 4;
  const up = Math.round(255 * (t % 1)), down = 255 - up;
  const c = t < 1 ? [255, up, 0] : t < 2 ? [down, 255, 0] : t < 3 ? [0, 255, up] : t < 4 ? [0, down, 255] : [0, 0, 255];
  const y = Math.round(i * H / BANDS), next = Math.round((i + 1) * H / BANDS);
  add(bar, 'rect', { x: 0, y: y, width: 89, height: next - y, fill: `rgb(${c})` });
}
add(bar, 'rect', { x: 0.5, y: 0.5, width: 89, height: H, fill: 'none', stroke: '#000' });
for (let i = 0; i < 100; i++) {
  const y = Math.round(H - i * 12.62);
  if (y < 0) break;
  add(bar, 'path', { d: `M90 ${y + 0.5}h${i % 6 ? 8 : 17}`, stroke: '#000' });
}

// Cooling fins: two crossing stacks of narrow closed loops.
const wire = document.getElementById('wire');
function fins(start, across, along, count, width) {
  let d = '';
  for (let i = 0; i < count; i++) {
    const a = i / count, b = (i + width) / count;
    const x1 = start[0] + across[0] * a, y1 = start[1] + across[1] * a;
    const x2 = start[0] + across[0] * b, y2 = start[1] + across[1] * b;
    d += `M${x1} ${y1}L${x1 + along[0]} ${y1 + along[1]}L${x2 + along[0]} ${y2 + along[1]}L${x2} ${y2}z`;
  }
  add(wire, 'path', { d });
}
fins([630, 514], [-312, 281], [582, 503], 46, 0.36);
fins([836, 524], [359, 311], [-501, 449], 46, 0.36);
// Fin roots, which lie only where the two stacks cross.
fins([728, 602], [-303, 288], [377, 323], 46, 0.7);
fins([728, 602], [377, 323], [-303, 288], 46, 0.7);
```
